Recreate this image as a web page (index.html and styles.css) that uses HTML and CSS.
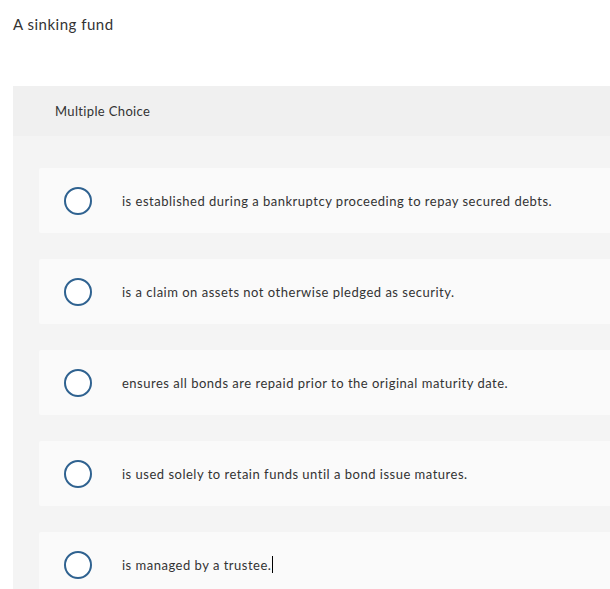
FILE: index.html
```html
<!DOCTYPE html>
<html>
<head>
<meta charset="utf-8">
<link rel="stylesheet" href="styles.css">
</head>
<body>
<div class="question">A sinking fund</div>
<div class="panel">
  <div class="panel-head">Multiple Choice</div>
  <div class="panel-body">
    <div class="option"><span class="radio"></span><span class="label">is established during a bankruptcy proceeding to repay secured debts.</span></div>
    <div class="option"><span class="radio"></span><span class="label">is a claim on assets not otherwise pledged as security.</span></div>
    <div class="option"><span class="radio"></span><span class="label">ensures all bonds are repaid prior to the original maturity date.</span></div>
    <div class="option"><span class="radio"></span><span class="label">is used solely to retain funds until a bond issue matures.</span></div>
    <div class="option"><span class="radio"></span><span class="label">is managed by a trustee.<span class="caret"></span></span></div>
  </div>
</div>
</body>
</html>
```

FILE: styles.css
```css
html, body {
  margin: 0;
  padding: 0;
  background: #ffffff;
  font-family: "Lato", "Liberation Sans", sans-serif;
  color: #333333;
}
body {
  width: 610px;
  height: 589px;
  overflow: hidden;
}
.question {
  padding: 14px 0 0 13px;
  font-size: 15px;
  line-height: 20px;
  letter-spacing: 0.5px;
  height: 72px;
  box-sizing: border-box;
}
.panel {
  margin-left: 13px;
  margin-top: 14px;
}
.panel-head {
  background: #f0f0f0;
  height: 50px;
  display: flex;
  align-items: center;
  padding-left: 42px;
  font-size: 13px;
  letter-spacing: 0.35px;
}
.panel-body {
  background: #f4f4f4;
  padding: 32px 0 20px 26px;
  display: flex;
  flex-direction: column;
  gap: 26px;
}
.option {
  background: #fafafa;
  height: 65px;
  display: flex;
  align-items: center;
  padding-left: 25px;
  border-radius: 2px 0 0 2px;
}
.radio {
  width: 24px;
  height: 24px;
  border: 2px solid #2f6290;
  border-radius: 50%;
  background: #ffffff;
  flex-shrink: 0;
  margin-right: 30px;
}
.label {
  font-size: 13px;
  line-height: 16px;
  letter-spacing: 0.5px;
  display: flex;
  align-items: center;
}
.caret {
  display: inline-block;
  width: 1px;
  height: 17px;
  background: #000;
  margin-left: 1px;
}
```
